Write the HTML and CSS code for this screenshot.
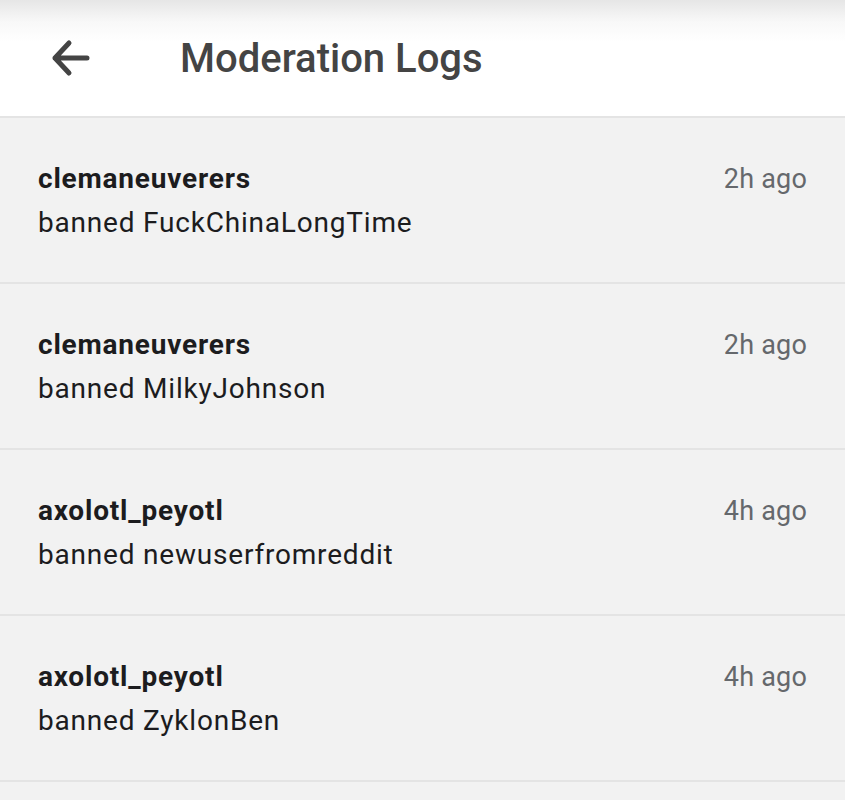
FILE: index.html
```html
<!DOCTYPE html>
<html lang="en">
<head>
  <meta charset="UTF-8">
  <meta name="viewport" content="width=device-width, initial-scale=1.0">
  <title>Moderation Logs</title>
  <link rel="stylesheet" href="styles.css">
</head>
<body>
<div class="topbar">
  <button class="back" type="button" aria-label="Back">
    <svg viewBox="0 0 40 40" width="40" height="40"><path d="M36 20H4M18 5L4 20l14 15"/></svg>
  </button>
  <h1 class="title">Moderation Logs</h1>
</div>
<div class="logs">
  <div class="log">
    <div class="log-head"><span class="mod">clemaneuverers</span><span class="time">2h ago</span></div>
    <div class="action">banned FuckChinaLongTime</div>
  </div>
  <div class="log">
    <div class="log-head"><span class="mod">clemaneuverers</span><span class="time">2h ago</span></div>
    <div class="action">banned MilkyJohnson</div>
  </div>
  <div class="log">
    <div class="log-head"><span class="mod">axolotl_peyotl</span><span class="time">4h ago</span></div>
    <div class="action">banned newuserfromreddit</div>
  </div>
  <div class="log">
    <div class="log-head"><span class="mod">axolotl_peyotl</span><span class="time">4h ago</span></div>
    <div class="action">banned ZyklonBen</div>
  </div>
</div>
</body>
</html>
```
FILE: styles.css
```css
*{
  padding: 0;
  margin: 0;
  box-sizing: border-box;
}
body{
  background-color: #f2f2f2;
  font-family: Roboto, "Liberation Sans", sans-serif;
  color: #1c1c1e;
}
.topbar{
  height: 118px;
  display: flex;
  align-items: center;
  background: linear-gradient(#e6e6e6 0, #f8f8f8 22px, #fff 42px);
  border-bottom: 2px solid #e4e4e4;
}
.back{
  margin-left: 51px;
  width: 40px;
  height: 40px;
  border: 0;
  background: none;
  display: flex;
}
.back svg{
  fill: none;
  stroke: #444;
  stroke-width: 5;
  stroke-linecap: round;
  stroke-linejoin: round;
}
.title{
  margin-left: 89px;
  font-size: 40px;
  font-weight: 500;
  color: #444;
}
.log{
  height: 166px;
  padding: 39px 38px 0 38px;
  border-bottom: 2px solid #e4e4e4;
}
.log-head{
  display: flex;
  justify-content: space-between;
  align-items: baseline;
  line-height: 44px;
}
.mod{
  font-size: 28px;
  font-weight: 700;
  letter-spacing: 0.8px;
}
.time{
  font-size: 27px;
  letter-spacing: 0.2px;
  color: #65686c;
}
.action{
  font-size: 28px;
  letter-spacing: 0.8px;
  line-height: 44px;
}
```
